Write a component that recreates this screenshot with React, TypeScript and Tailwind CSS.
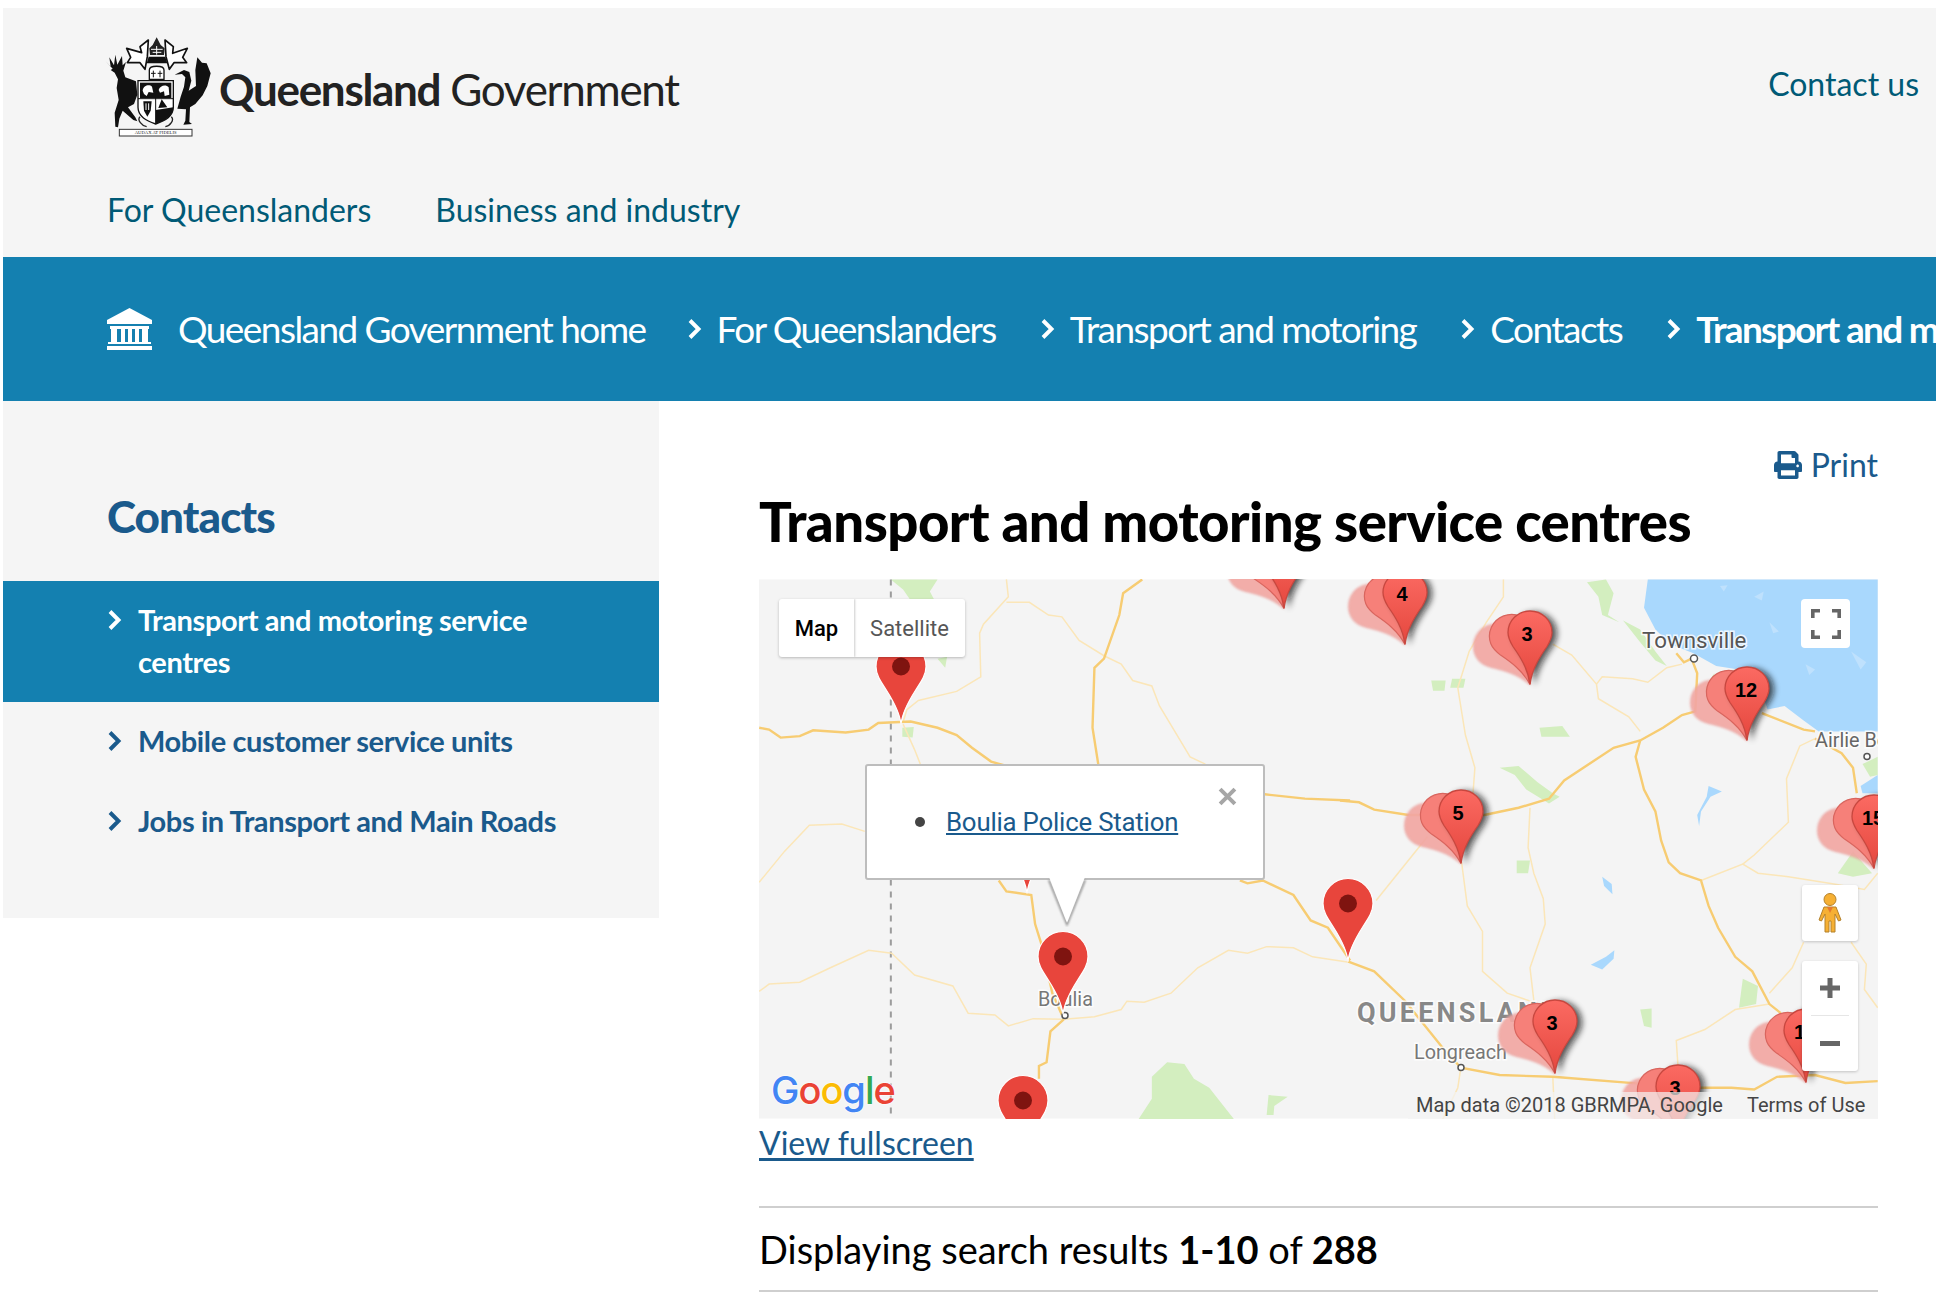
import React from "react";
import { FaPrint } from "react-icons/fa";

const PIN = "M0,0 C-1,-12 -8,-24 -15,-35 C-21,-44 -25,-50 -25,-58 A25,25 0 1 1 25,-58 C25,-50 21,-44 15,-35 C8,-24 1,-12 0,0 Z";
const CL = "M0,0 C-2,-16 -10,-28 -17,-38 C-20,-43 -22,-47 -22,-52 A22,21.5 0 1 1 22,-52 C22,-47 20,-43 17,-38 C10,-28 2,-16 0,0 Z";

function Pin({ x, y }: { x: number; y: number }) {
  return (
    <g transform={`translate(${x} ${y})`}>
      <path d={PIN} fill="#e8453c" stroke="#ffffff" strokeWidth="1.2" />
      <circle cx="0" cy="-58" r="9" fill="#7f1410" />
    </g>
  );
}

function Cluster({ x, y, n }: { x: number; y: number; n: string }) {
  return (
    <g transform={`translate(${x} ${y})`}>
      <g transform="rotate(-42)" opacity="0.92">
        <path d={CL} fill="#f2a7a3" stroke="#e79a96" strokeWidth="1" filter="url(#mapsoft)" />
      </g>
      <g transform="rotate(-21)">
        <path d={CL} fill="#f68079" stroke="#d9655e" strokeWidth="1.2" />
      </g>
      <path d={CL} transform="translate(5 1)" fill="#111" opacity="0.7" filter="url(#mapblur)" />
      <path d={CL} fill="url(#clusterfill)" stroke="#c8473f" strokeWidth="1.3" />
      <text x={n.length > 1 ? -1 : -3} y="-44" textAnchor="middle" fontSize="20" fontWeight="700" fill="#000" className="font-['Liberation_Sans',sans-serif]">{n}</text>
    </g>
  );
}

const MAJOR = [
  "M24,460 L50,465 80,487 130,483 165,467 250,473 310,465 335,447 420,443 490,460 540,480 580,515 630,553 670,565",
  "M1345,643 L1450,655 1568,660",
  "M1280,880 L1300,888 1340,880 1420,920 1465,990 1510,1010 1568,1100",
  "M1025,52 L975,90 965,150 925,270 900,295 895,460 910,560",
  "M650,880 L670,910 735,920 745,1000 760,1050 790,1190 815,1250",
  "M820,1262 L785,1295 775,1380 755,1390 755,1425",
];
const MINOR2 = [
  "M670,52 L675,100 610,175 600,200 603,320 540,360 440,385 410,410 400,445",
  "M670,115 L730,115 780,150 815,155 860,220 925,262 970,285 1000,330 1050,345 1070,400 1110,470 1150,540 1190,560",
  "M400,450 L430,520 445,560",
  "M24,885 L90,800 155,728 240,725 300,745",
  "M24,1185 L50,1165 130,1160 210,1120 310,1072 370,1080 430,1140 530,1170 570,1245 640,1250 675,1280 740,1260 820,1262 900,1255 970,1235 985,1212 1030,1215 1100,1190 1170,1120 1250,1072 1300,1080 1350,1062 1420,1065 1470,1090 1565,1105",
];
const MAJOR3 = [
  "M0,660 L50,665 90,685 180,700 380,700 470,680 550,655 590,605 720,515 790,495 850,460 900,425 935,415 940,310 925,270 905,280 885,255",
  "M1110,420 L1220,465 1250,470",
  "M790,495 L778,540 800,630 830,690 845,770 865,830 895,860 950,880 970,950 995,1010 1040,1090 1085,1130 1130,1220 1160,1245",
  "M22,1103 L90,1130 170,1210 270,1340 318,1395 420,1415 560,1420 780,1438 870,1450 1030,1450 1090,1455 1150,1420 1250,1415 1330,1437 1415,1432",
  "M1250,490 L1320,530 1350,570 1360,640",
];
const MINOR3 = [
  "M430,52 L430,100 385,170 340,250 310,350 330,480 355,570 350,640",
  "M560,230 L610,260 675,340 690,320 770,325 810,335 860,295 900,285",
  "M675,340 L680,380 760,430 790,470",
  "M500,680 L495,790 510,860 535,930 540,1000 500,1120 510,1210",
  "M320,830 L335,950 375,1020 375,1130 440,1190 510,1215",
  "M230,760 L95,935",
  "M950,880 L1060,835 1100,860 1180,870 1300,890 1380,905 1415,860",
  "M1060,835 L1090,810 1180,720 1175,600 1210,510 1250,490",
  "M1220,1050 L1190,1120 1130,1190",
  "M1345,1050 L1385,1110 1380,1180 1415,1230",
  "M890,1400 L885,1320 960,1290 1040,1235 1130,1220",
  "M560,1420 L565,1537",
  "M318,1395 L310,1450 270,1537",
];
const GREEN2 = [
  "M368,52 L490,52 470,85 485,115 420,110 400,80 Z",
  "M1015,1537 L1050,1480 1050,1420 1090,1380 1135,1385 1160,1425 1200,1450 1265,1537 Z",
  "M1350,1525 L1355,1470 1405,1475 1370,1500 1368,1525 Z",
  "M398,460 L428,458 425,487 398,485 Z",
  "M490,270 L515,265 510,295 Z",
];
const GREEN3 = [
  "M650,60 L700,52 720,90 705,150 735,170 690,150 680,100 Z",
  "M745,165 L790,190 830,250 860,290 830,275 790,225 Z",
  "M240,330 L278,330 275,358 245,358 Z",
  "M295,325 L330,325 325,350 290,350 Z",
  "M525,460 L585,455 605,485 530,485 Z",
  "M420,570 L470,565 520,610 560,640 578,650 550,668 490,630 460,590 Z",
  "M465,825 L500,825 495,860 465,860 Z",
  "M790,1235 L820,1232 820,1285 800,1280 Z",
  "M1050,1230 L1060,1150 1100,1170 1095,1220 Z",
  "M1310,860 L1350,800 1400,860 1350,870 Z",
  "M960,350 L985,310 985,345 965,380 Z",
  "M1375,560 L1415,540 1415,590 1395,595 Z",
];
const LAKES3 = [
  "M690,870 L715,890 717,918 695,895 Z",
  "M660,1112 L700,1090 722,1072 720,1095 690,1125 Z",
  "M940,700 L965,650 970,620 1005,635 975,650 950,690 945,730 Z",
];
const SHOALS = [
  "M1090,100 L1115,85 1110,110 Z",
  "M1130,170 L1155,195 1140,200 Z",
  "M1225,285 L1250,300 1235,315 Z",
  "M1345,250 L1385,280 1370,300 Z",
  "M1000,70 L1020,68 1010,85 Z",
];

function MapArt() {
  return (
    <svg viewBox="0 0 1119 539" className="absolute inset-0 h-full w-full">
      <defs>
        <filter id="mapblur" x="-40%" y="-40%" width="180%" height="180%">
          <feGaussianBlur stdDeviation="3" />
        </filter>
        <filter id="mapsoft" x="-10%" y="-10%" width="120%" height="120%">
          <feGaussianBlur stdDeviation="0.8" />
        </filter>
        <linearGradient id="clusterfill" x1="0" y1="0" x2="0" y2="1">
          <stop offset="0" stopColor="#fb6a62" />
          <stop offset="1" stopColor="#e5473e" />
        </linearGradient>
      </defs>
      <rect width="1119" height="539" fill="#f4f4f4" />
      <g transform="translate(-9 -19) scale(0.3827 0.3636)">
        {GREEN2.map((d) => <path key={d} d={d} fill="#d3eebf" />)}
        <path d="M368,52 L368,1537" stroke="#9c9c9c" strokeWidth="2" strokeDasharray="6 6" vectorEffect="non-scaling-stroke" fill="none" />
        {MINOR2.map((d) => <path key={d} d={d} fill="none" stroke="#fbe6b8" strokeWidth="1.5" vectorEffect="non-scaling-stroke" />)}
        {MAJOR.map((d) => <path key={d} d={d} fill="none" stroke="#f7cc72" strokeWidth="2.4" vectorEffect="non-scaling-stroke" />)}
      </g>
      <g transform="translate(581 -19) scale(0.38 0.3636)">
        <path d="M810,52 L1415,52 L1415,470 1340,470 1260,470 1220,440 1170,400 1125,410 1100,330 1050,300 990,290 930,255 870,230 830,190 800,130 Z" fill="#a9d8fd" />
        <path d="M1375,640 L1370,620 1415,590 1415,640 Z" fill="#a9d8fd" />
        {SHOALS.map((d) => <path key={d} d={d} fill="#bfe1fd" />)}
        {GREEN3.map((d) => <path key={d} d={d} fill="#d3eebf" />)}
        {LAKES3.map((d) => <path key={d} d={d} fill="#a9d8fd" />)}
        {MINOR3.map((d) => <path key={d} d={d} fill="none" stroke="#fbe6b8" strokeWidth="1.5" vectorEffect="non-scaling-stroke" />)}
        {MAJOR3.map((d) => <path key={d} d={d} fill="none" stroke="#f7cc72" strokeWidth="2.4" vectorEffect="non-scaling-stroke" />)}
      </g>
      <g className="font-[Roboto,sans-serif]" stroke="#ffffff" strokeWidth="3" strokeOpacity="0.8" style={{ paintOrder: "stroke" }}>
        <text x="883" y="68" fontSize="22.3" fill="#555">Townsville</text>
        <text x="1056" y="167" fontSize="19.8" fill="#666">Airlie Beach</text>
        <text x="598" y="442" fontSize="27" fontWeight="700" letterSpacing="3.2" fill="#888">QUEENSLAND</text>
        <text x="655" y="479" fontSize="19.8" fill="#777">Longreach</text>
        <text x="279" y="426" fontSize="19.8" fill="#777">Boulia</text>
      </g>
      <g fill="#ffffff" stroke="#555" strokeWidth="1.5">
        <circle cx="935" cy="79" r="3.5" />
        <circle cx="1108" cy="177" r="3" />
        <circle cx="702" cy="488" r="3" />
        <circle cx="306" cy="436" r="3" />
      </g>
      <Pin x={142} y={145} />
      <Pin x={268} y={314} />
      <Pin x={304} y={435} />
      <Pin x={589} y={382} />
      <Pin x={264} y={579} />
      <Cluster x={525} y={29} n="" />
      <Cluster x={646} y={65} n="4" />
      <Cluster x={771} y={105} n="3" />
      <Cluster x={988} y={161} n="12" />
      <Cluster x={702} y={284} n="5" />
      <Cluster x={1115} y={289} n="15" />
      <Cluster x={796} y={494} n="3" />
      <Cluster x={1047} y={503} n="14" />
      <Cluster x={919} y={559} n="3" />
    </svg>
  );
}

function CoatOfArms() {
  return (
    <svg viewBox="0 0 420 360" className="h-[120px] w-[140px] shrink-0">
      <g fill="#fff" stroke="#111" strokeWidth="5" strokeLinejoin="round">
        <path d="M175,60 L150,80 155,98 110,85 122,112 112,128 150,128 165,148 172,110 Z" />
        <path d="M225,60 L250,80 248,100 292,85 278,112 290,128 252,128 238,148 228,110 Z" />
      </g>
      <path d="M200,52 L188,75 178,85 180,105 222,105 224,85 212,75 Z" fill="#222" />
      <path d="M183,88 L218,88 M200,78 L200,104 M188,97 L214,97" stroke="#fff" strokeWidth="3" />
      <path d="M176,110 L226,110 232,130 170,130 Z" fill="#111" />
      <path d="M178,150 C178,135 222,135 222,150 L222,178 L178,178 Z" fill="#fff" stroke="#111" strokeWidth="4" />
      <path d="M190,152 L190,172 M183,160 L197,160 M210,152 L210,172 M203,160 L217,160" stroke="#111" strokeWidth="3" />
      <path d="M46,122 L62,140 58,112 72,136 76,104 82,134 96,108 98,136 108,126 100,152 106,172 138,184 142,224 132,252 114,262 136,292 142,304 130,300 98,272 88,296 84,322 76,320 74,278 86,240 80,204 84,178 74,158 62,150 68,146 Z" fill="#111" />
      <path d="M254,164 L282,150 298,156 304,182 296,212 318,198 316,150 322,112 336,128 350,130 362,160 352,198 338,226 316,252 300,262 298,306 306,312 280,314 286,302 288,268 262,266 272,230 282,200 286,172 276,162 Z" fill="#111" />
      <path d="M144,182 L250,182 250,262 C250,290 224,302 197,312 C170,302 144,290 144,262 Z" fill="#fff" stroke="#111" strokeWidth="4" />
      <path d="M150,188 L244,188 244,234 L150,234 Z" fill="#111" />
      <path d="M158,212 C160,196 178,192 186,200 L190,218 176,216 170,228 162,222 Z M206,210 C210,196 228,192 236,202 L238,224 224,228 222,214 210,218 Z" fill="#fff" />
      <path d="M197,234 L197,312 M144,236 L250,236" stroke="#111" strokeWidth="3" />
      <path d="M197,270 L250,262 C250,290 224,302 197,312 Z M215,238 L232,262 205,264 Z" fill="#111" />
      <path d="M160,244 L185,244 182,272 172,290 162,272 Z" fill="#111" />
      <path d="M168,250 L168,270 M176,250 L176,270" stroke="#fff" strokeWidth="3" />
      <path d="M150,290 C140,300 156,318 170,320 M244,290 C254,300 240,318 226,320" fill="none" stroke="#222" strokeWidth="4" />
      <rect x="88" y="328" width="218" height="20" fill="#fff" stroke="#333" strokeWidth="3" />
      <text x="197" y="343" textAnchor="middle" fontSize="14" fill="#222" className="font-['Liberation_Serif',serif]">AUDAX AT FIDELIS</text>
    </svg>
  );
}

function Chevron({ className }: { className: string }) {
  return (
    <svg viewBox="0 0 14 20" className={className} fill="none" stroke="currentColor" strokeWidth="3.9" strokeLinecap="butt" strokeLinejoin="miter">
      <path d="M2,1.5 L10.5,10 L2,18.5" />
    </svg>
  );
}

function Crumb({ children, bold }: { children: React.ReactNode; bold?: boolean }) {
  return (
    <div className="flex shrink-0 items-center gap-[15px] whitespace-nowrap">
      <Chevron className="h-[20px] w-[14px] text-white" />
      <span className={bold ? "font-bold tracking-[-1.7px]" : ""}>{children}</span>
    </div>
  );
}

export default function App() {
  return (
    <div className="h-[1304px] w-[1936px] overflow-hidden bg-white pl-[3px] pt-[8px] font-['Lato',sans-serif] text-black">
      <header className="h-[249px] bg-[#f5f5f5]">
        <div className="flex h-[186px] items-start justify-between pr-[17px]">
          <div className="flex items-center pl-[87px] pt-[12px]">
            <CoatOfArms />
            <div className="-ml-[11px] mt-[18px] whitespace-nowrap text-[44px] leading-none tracking-[-1.3px] text-[#222]">
              <span className="font-bold">Queensland</span> <span className="font-normal">Government</span>
            </div>
          </div>
          <a className="mt-[60px] text-[32px] leading-none text-[#005a76]">Contact us</a>
        </div>
        <nav className="flex gap-[64px] pl-[104px] text-[32px] leading-none text-[#005a76]">
          <a>For Queenslanders</a>
          <a>Business and industry</a>
        </nav>
      </header>

      <div className="flex h-[144px] items-center overflow-hidden whitespace-nowrap bg-[#1480b0] pl-[104px] text-[37px] tracking-[-1.55px] text-white">
        <svg viewBox="0 0 45 42" className="mr-[26px] h-[42px] w-[45px] shrink-0" fill="#ffffff">
          <path d="M22.5,0 L45,12 L45,16 L0,16 L0,12 Z" />
          <rect x="3" y="18" width="39" height="3" />
          <rect x="4" y="21" width="6" height="13" />
          <rect x="14" y="21" width="4" height="13" />
          <rect x="21" y="21" width="4" height="13" />
          <rect x="28" y="21" width="4" height="13" />
          <rect x="35" y="21" width="6" height="13" />
          <rect x="1" y="34" width="43" height="2" />
          <rect x="0" y="38" width="45" height="4" />
        </svg>
        <span className="mr-[42px]">Queensland Government home</span>
        <div className="flex gap-[45px]">
          <Crumb>For Queenslanders</Crumb>
          <Crumb>Transport and motoring</Crumb>
          <Crumb>Contacts</Crumb>
          <Crumb bold>Transport and motoring service centres</Crumb>
        </div>
      </div>

      <div className="flex items-start">
        <aside className="h-[517px] w-[656px] shrink-0 bg-[#f5f5f5] text-[#1a5a8c]">
          <h2 className="pl-[104px] pt-[90px] text-[44px] font-black leading-[50px] tracking-[-0.9px]">Contacts</h2>
          <ul className="mt-[40px] text-[29px] font-bold leading-[42px] tracking-[-0.4px]">
            <li className="flex h-[121px] items-start gap-[16px] bg-[#1480b0] pl-[105px] pt-[18px] pr-[100px] text-white">
              <Chevron className="mt-[11px] h-[20px] w-[14px] shrink-0" />
              <span>Transport and motoring service centres</span>
            </li>
            <li className="-mt-px flex h-[80px] items-center gap-[16px] pl-[105px]">
              <Chevron className="h-[20px] w-[14px] shrink-0" />
              <span>Mobile customer service units</span>
            </li>
            <li className="flex h-[80px] items-center gap-[16px] pl-[105px]">
              <Chevron className="h-[20px] w-[14px] shrink-0" />
              <span>Jobs in Transport and Main Roads</span>
            </li>
          </ul>
        </aside>

        <main className="ml-[100px] w-[1119px] shrink-0">
          <div className="flex items-center justify-end gap-[9px] pt-[46px] text-[32px] leading-[36px] text-[#1a5a8c]">
            <FaPrint className="h-[28px] w-[28px]" />
            <span>Print</span>
          </div>
          <h1 className="mt-[8px] whitespace-nowrap text-[54.5px] font-black leading-[60px] tracking-[-0.5px]">Transport and motoring service centres</h1>
          <div className="relative mt-[28px] h-[540px] w-[1119px] overflow-hidden font-[Roboto,sans-serif]">
            <MapArt />

            <div className="absolute left-[20px] top-[20px] flex h-[58px] w-[186px] overflow-hidden rounded-[3px] bg-white text-[22px] shadow-[0_1px_3px_rgba(0,0,0,0.25)]">
              <div className="flex w-[75px] items-center justify-center font-medium text-black shadow-[1px_0_2px_rgba(0,0,0,0.2)]">Map</div>
              <div className="flex flex-1 items-center justify-center text-[#565656]">Satellite</div>
            </div>

            <div className="absolute left-[106px] top-[185px] h-[116px] w-[400px] rounded-[3px] border-2 border-[#bdbdbd] bg-white">
              <ul className="pl-[79px] pt-[40px] text-[25.8px] leading-[32px] tracking-[-0.2px] text-[#1a5a8c]">
                <li className="relative">
                  <span className="absolute -left-[31px] top-[11px] h-[10px] w-[10px] rounded-full bg-[#444]" />
                  <a className="underline underline-offset-[2px]">Boulia Police Station</a>
                </li>
              </ul>
              <svg viewBox="0 0 18 18" className="absolute right-[26px] top-[21px] h-[19px] w-[19px]" stroke="#a6a6a6" strokeWidth="3.8" fill="none">
                <path d="M2,2 L16,16 M16,2 L2,16" />
              </svg>
            </div>
            <svg viewBox="0 0 42 50" className="absolute left-[287px] top-[298px] h-[50px] w-[42px]">
              <defs>
                <filter id="tailblur" x="-20%" y="-20%" width="140%" height="140%">
                  <feGaussianBlur stdDeviation="0.9" />
                </filter>
              </defs>
              <path d="M3,3 L21,47 L39,3" fill="none" stroke="#8f8f8f" strokeWidth="2" filter="url(#tailblur)" />
              <path d="M3,0 L21,46 L39,0 Z" fill="#ffffff" />
            </svg>

            <div className="absolute left-[1042px] top-[20px] flex h-[49px] w-[49px] items-center justify-center rounded-[4px] bg-white">
              <svg viewBox="0 0 30 30" className="h-[30px] w-[30px]" fill="none" stroke="#666" strokeWidth="3.6">
                <path d="M1.8,9 V1.8 H9 M21,1.8 H28.2 V9 M28.2,21 V28.2 H21 M9,28.2 H1.8 V21" />
              </svg>
            </div>

            <div className="absolute left-[1043px] top-[306px] flex h-[56px] w-[56px] items-center justify-center rounded-[3px] bg-white shadow-[0_1px_3px_rgba(0,0,0,0.2)]">
              <svg viewBox="0 0 24 40" className="h-[40px] w-[24px]">
                <circle cx="12" cy="6.5" r="6" fill="#f6b034" stroke="#b4812a" strokeWidth="1" />
                <path d="M6,14 H18 L23,27 20.5,28 17,21 17,39 13,39 13,28 11,28 11,39 7,39 7,21 3.5,28 1,27 Z" fill="#f6b034" stroke="#b4812a" strokeWidth="1" />
                <path d="M9,14 L12,20 L15,14 Z" fill="#e57a2e" />
              </svg>
            </div>

            <div className="absolute left-[1043px] top-[382px] flex h-[110px] w-[56px] flex-col items-center rounded-[3px] bg-white shadow-[0_1px_3px_rgba(0,0,0,0.2)]">
              <div className="flex h-[54px] w-full items-center justify-center">
                <svg viewBox="0 0 20 20" className="h-[20px] w-[20px]" fill="#666">
                  <path d="M7.5,0 H12.5 V7.5 H20 V12.5 H12.5 V20 H7.5 V12.5 H0 V7.5 H7.5 Z" />
                </svg>
              </div>
              <div className="h-[1px] w-[38px] bg-[#e6e6e6]" />
              <div className="flex flex-1 items-center justify-center">
                <div className="h-[5px] w-[20px] bg-[#666]" />
              </div>
            </div>

            <div className="absolute bottom-[5px] left-[12px] font-[Inter,sans-serif] text-[38px] font-medium leading-[48px] tracking-[-1px] [text-shadow:0_0_2px_#fff,0_0_2px_#fff]">
              <span className="text-[#4285f4]">G</span>
              <span className="text-[#ea4335]">o</span>
              <span className="text-[#fbbc05]">o</span>
              <span className="text-[#4285f4]">g</span>
              <span className="text-[#34a853]">l</span>
              <span className="text-[#ea4335]">e</span>
            </div>

            <div className="absolute bottom-0 right-0 flex h-[27px] w-[470px] items-center whitespace-nowrap bg-[rgba(244,244,244,0.7)] pb-[2px] pl-[8px] text-[20px] leading-none text-[#444]">
              <span>Map data ©2018 GBRMPA, Google</span>
              <span className="ml-[24px]">Terms of Use</span>
            </div>
          </div>

          <a className="mt-[4px] block text-[32px] leading-[40px] text-[#1a5a8c] underline underline-offset-[3px]">View fullscreen</a>
          <div className="mt-[43px] flex h-[86px] items-center border-y-2 border-[#cfcfcf] text-[38px]">
            <span>Displaying search results <b>1-10</b> of <b>288</b></span>
          </div>
        </main>
      </div>
    </div>
  );
}
